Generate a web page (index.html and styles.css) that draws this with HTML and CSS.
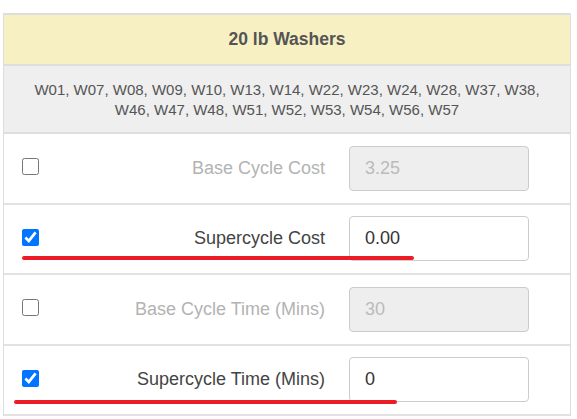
FILE: index.html
```
<!DOCTYPE html>
<html>
<head>
<meta charset="utf-8">
<link rel="stylesheet" href="styles.css">
</head>
<body>
<div class="panel">
  <div class="head">20 lb Washers</div>
  <div class="list">W01, W07, W08, W09, W10, W13, W14, W22, W23, W24, W28, W37, W38,<br>W46, W47, W48, W51, W52, W53, W54, W56, W57</div>
  <div class="row">
    <input type="checkbox" class="chk">
    <label class="lbl off">Base Cycle Cost</label>
    <input type="text" class="fld" value="3.25" disabled>
  </div>
  <div class="row">
    <input type="checkbox" class="chk" checked>
    <label class="lbl">Supercycle Cost</label>
    <input type="text" class="fld" value="0.00">
    <span class="mark mark-a"></span>
  </div>
  <div class="row">
    <input type="checkbox" class="chk">
    <label class="lbl off">Base Cycle Time (Mins)</label>
    <input type="text" class="fld" value="30" disabled>
  </div>
  <div class="row">
    <input type="checkbox" class="chk" checked>
    <label class="lbl">Supercycle Time (Mins)</label>
    <input type="text" class="fld" value="0">
    <span class="mark mark-b"></span>
  </div>
</div>
</body>
</html>
```
FILE: styles.css
```
html, body {
  margin: 0;
  padding: 0;
  background: #fff;
}
body {
  font-family: "Liberation Sans", Arial, sans-serif;
  color: #444;
}
.panel {
  margin: 13px 0 0 3px;
  width: 566px;
  border-top: 2px solid #dedede;
  border-left: 1px solid #dedede;
  border-right: 1px solid #dedede;
}
.head {
  background: #f7f0c2;
  height: 49px;
  display: flex;
  align-items: center;
  justify-content: center;
  font-weight: bold;
  font-size: 17.5px;
  color: #555;
  border-bottom: 2px solid #dedede;
}
.list {
  background: #efefef;
  height: 68px;
  box-sizing: border-box;
  padding-top: 14px;
  text-align: center;
  font-size: 15px;
  line-height: 20px;
  color: #555;
  border-bottom: 2px solid #dedede;
}
.row {
  position: relative;
  display: flex;
  align-items: center;
  height: 68.5px;
  padding: 0 41px 0 18px;
  border-bottom: 2px solid #e2e2e2;
}
.chk {
  width: 17px;
  height: 17px;
  margin: -3px 0 0 0;
  flex: none;
}
.lbl {
  flex: 1;
  text-align: right;
  font-size: 18px;
  margin-right: 24px;
  color: #444;
}
.lbl.off {
  color: #b3b3b3;
}
.fld {
  width: 180px;
  height: 45px;
  box-sizing: border-box;
  border: 1px solid #cccccc;
  border-radius: 4px;
  padding: 0 0 0 15px;
  font-family: "Liberation Sans", Arial, sans-serif;
  font-size: 18px;
  color: #333;
  background: #fff;
  flex: none;
  outline: none;
}
.fld:disabled {
  background: #eeeeee;
  color: #bbbbbb;
  -webkit-text-fill-color: #bbbbbb;
}
.mark {
  position: absolute;
  height: 4px;
  border-radius: 2px;
  background: #ed1c24;
}
.mark-a {
  left: 18px;
  width: 392px;
  top: 51px;
}
.mark-b {
  left: 10px;
  width: 383px;
  top: 54px;
}
```
